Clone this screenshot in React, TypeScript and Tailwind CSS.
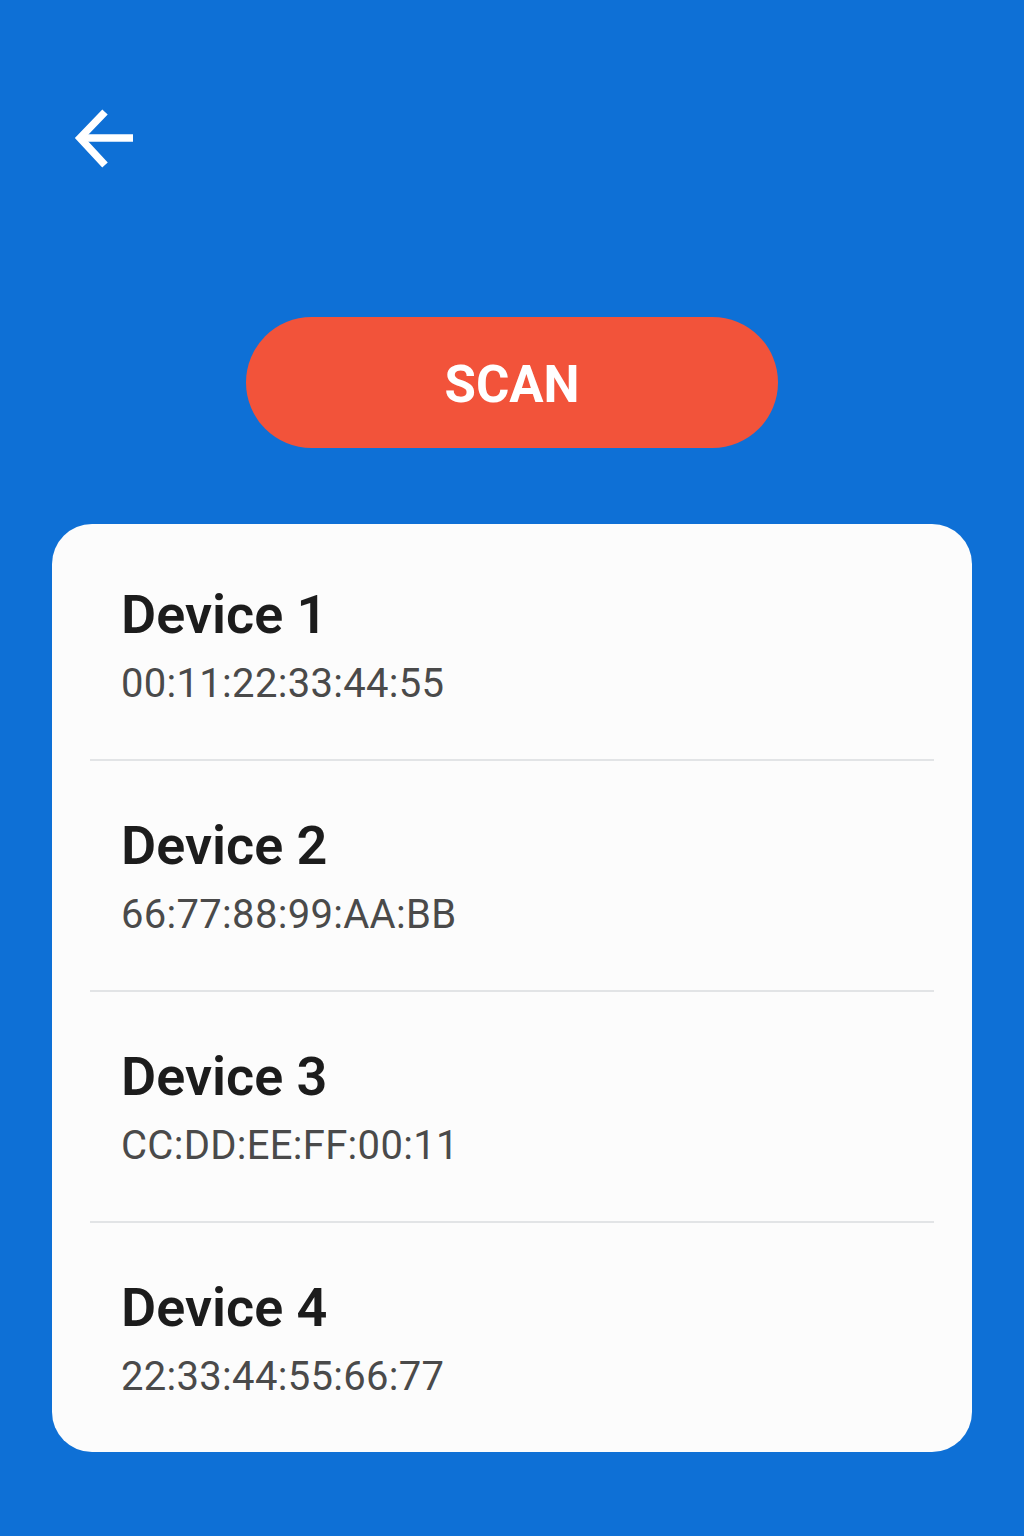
const devices = [
  { name: 'Device 1', mac: '00:11:22:33:44:55' },
  { name: 'Device 2', mac: '66:77:88:99:AA:BB' },
  { name: 'Device 3', mac: 'CC:DD:EE:FF:00:11' },
  { name: 'Device 4', mac: '22:33:44:55:66:77' },
];

export default function App() {
  return (
    <div
      className="w-[1024px] h-[1536px] bg-[#0e70d6] flex flex-col"
      style={{ fontFamily: 'Roboto, "Noto Sans", sans-serif' }}
    >
      <div className="pl-[72px] pt-[106px] h-[317px]">
        <svg width="64" height="64" viewBox="0 0 64 64" fill="none">
          <path d="M61 32H9" stroke="white" strokeWidth="7.5" />
          <path d="M33 6L8 32L33 59" stroke="white" strokeWidth="7.5" />
        </svg>
      </div>

      <div className="flex justify-center">
        <button className="w-[532px] h-[131px] pt-[5px] rounded-full bg-[#f2533a] text-white text-[51px] font-bold flex items-center justify-center">
          SCAN
        </button>
      </div>

      <div className="mt-[76px] mx-[52px] bg-[#fcfcfc] rounded-[40px] pt-[6px] h-[928px]">
        {devices.map((d, i) => (
          <div key={d.name}>
            {i > 0 && <div className="mx-[38px] h-[2px] bg-[#e2e4e6]" />}
            <div className="h-[229px] px-[69px] pt-[53px]">
              <div className="text-[54px] leading-[64px] font-semibold text-[#1c1c1c]">
                {d.name}
              </div>
              <div className="text-[40px] leading-[48px] text-[#4a4a4a] mt-[13px] tracking-[0.3px]">
                {d.mac}
              </div>
            </div>
          </div>
        ))}
      </div>
    </div>
  );
}
